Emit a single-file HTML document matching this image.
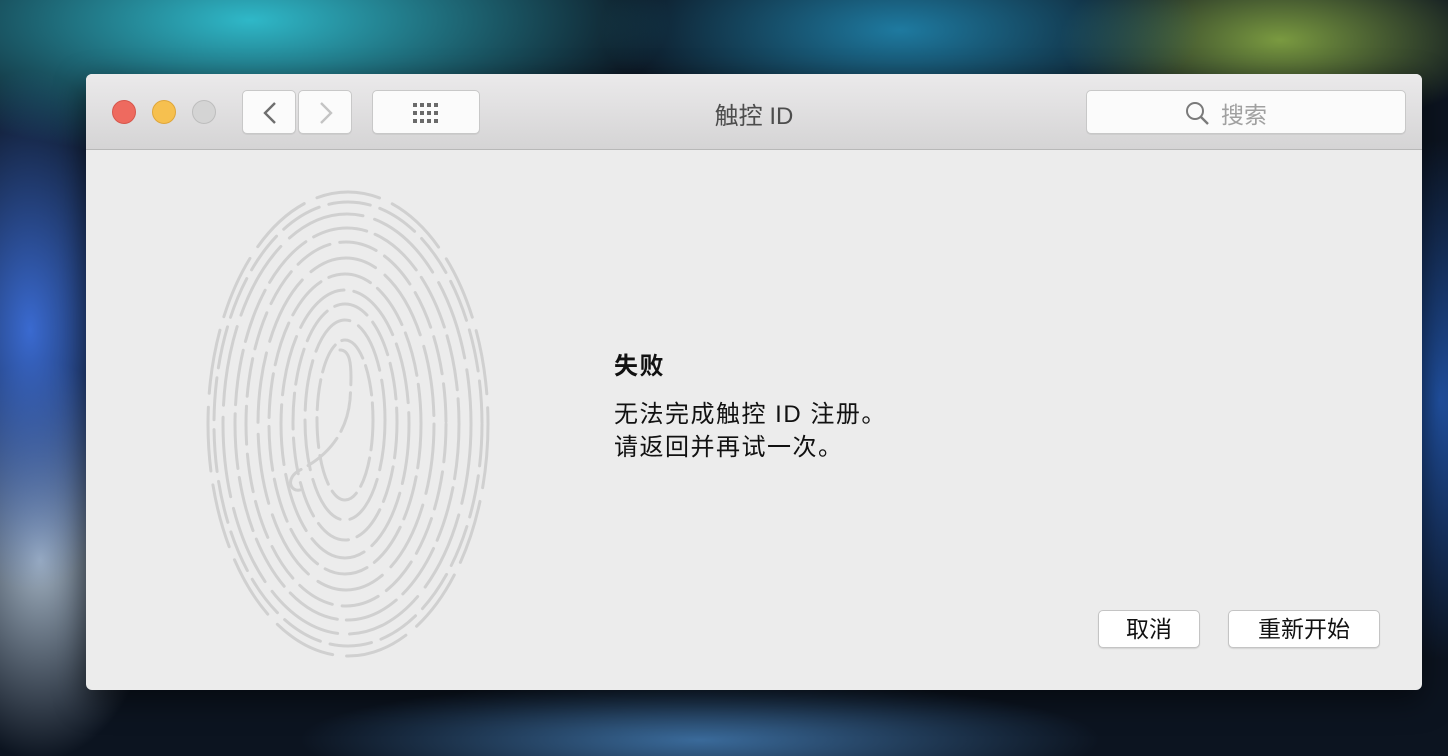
<!DOCTYPE html>
<html><head><meta charset="utf-8"><style>
*{margin:0;padding:0;box-sizing:border-box}
body{width:1448px;height:756px;overflow:hidden;position:relative;font-family:"Liberation Sans","Noto Sans CJK SC",sans-serif;
background:
radial-gradient(ellipse 420px 140px at 250px 20px,#2fb8c8 0%,rgba(40,160,180,0) 100%),
radial-gradient(ellipse 300px 110px at 900px 30px,#1e7aa0 0%,rgba(30,120,160,0) 100%),
radial-gradient(ellipse 220px 90px at 1280px 40px,#7a9a40 0%,rgba(120,150,60,0) 100%),
radial-gradient(ellipse 120px 260px at 30px 330px,#3a6ad0 0%,rgba(50,100,200,0) 100%),
radial-gradient(ellipse 120px 200px at 40px 560px,#a0b0c0 0%,rgba(150,170,190,0) 100%),
radial-gradient(ellipse 100px 260px at 1440px 400px,#2050a0 0%,rgba(30,80,160,0) 100%),
radial-gradient(ellipse 400px 60px at 700px 740px,#3a6a9a 0%,rgba(60,100,150,0) 100%),
#0c1420;}
.win{position:absolute;left:86px;top:74px;width:1336px;height:616px;background:#ececec;border-radius:6px;overflow:hidden;box-shadow:0 10px 30px rgba(0,0,0,.5)}
.tb{height:76px;background:linear-gradient(#ebeaeb,#d5d4d5);border-bottom:1px solid #b8b8b8;position:relative}
.dot{position:absolute;top:26px;width:24px;height:24px;border-radius:50%}
.btn{position:absolute;background:#fbfbfb;border:1px solid #c8c8c8;border-radius:5px;box-shadow:0 1px 0 rgba(0,0,0,.05)}
.title{position:absolute;left:0;right:0;top:22px;text-align:center;font-size:24px;color:#4d4d4d}
.txt{position:absolute;left:528px;color:#111;font-size:24px;letter-spacing:1.5px;white-space:nowrap}
.pb{position:absolute;top:536px;height:38px;background:#fff;border:1px solid #c4c4c4;border-radius:5px;font-size:23px;text-align:center;line-height:36px;color:#111;box-shadow:0 1px 1px rgba(0,0,0,.1)}
</style></head><body>
<div class="win">
<div class="tb">
<div class="dot" style="left:26px;background:#ee6a5f;border:1px solid #d6574c"></div>
<div class="dot" style="left:66px;background:#f6c04f;border:1px solid #dfa63a"></div>
<div class="dot" style="left:106px;background:#d4d4d4;border:1px solid #bdbdbd"></div>
<div class="btn" style="left:156px;top:16px;width:54px;height:44px"><svg width="54" height="44"><path d="M32 12 L22 22 L32 32" fill="none" stroke="#6e6e6e" stroke-width="2.4"/></svg></div>
<div class="btn" style="left:212px;top:16px;width:54px;height:44px"><svg width="54" height="44"><path d="M22 12 L32 22 L22 32" fill="none" stroke="#c4c4c4" stroke-width="2.4"/></svg></div>
<div class="btn" style="left:286px;top:16px;width:108px;height:44px"><svg width="108" height="44"><g fill="#6a6a6a">
<rect x="40" y="12" width="4" height="4"/><rect x="47" y="12" width="4" height="4"/><rect x="54" y="12" width="4" height="4"/><rect x="61" y="12" width="4" height="4"/>
<rect x="40" y="20" width="4" height="4"/><rect x="47" y="20" width="4" height="4"/><rect x="54" y="20" width="4" height="4"/><rect x="61" y="20" width="4" height="4"/>
<rect x="40" y="28" width="4" height="4"/><rect x="47" y="28" width="4" height="4"/><rect x="54" y="28" width="4" height="4"/><rect x="61" y="28" width="4" height="4"/></g></svg></div>
<div class="title">触控 ID</div>
<div class="btn" style="left:1000px;top:16px;width:320px;height:44px">
<svg width="30" height="30" style="position:absolute;left:96px;top:8px"><circle cx="12" cy="12" r="8" fill="none" stroke="#7a7a7a" stroke-width="2"/><path d="M18 18 L25 25" stroke="#7a7a7a" stroke-width="2.4"/></svg>
<span style="position:absolute;left:134px;top:5px;font-size:23px;color:#a0a0a0">搜索</span></div>
</div>
<svg style="position:absolute;left:0;top:76px" width="500" height="540" viewBox="86 150 500 540">
<g fill="none" stroke="#d0d0d0" stroke-width="3" stroke-linecap="round">
<path d="M340 350 C352 350 352 370 350 400 C346 440 320 460 300 470 C285 478 290 492 300 490" stroke-dasharray="40 8"/>
<ellipse cx="345" cy="420" rx="28" ry="80" stroke-dasharray="30 8"/>
<ellipse cx="345" cy="420" rx="40" ry="100" stroke-dasharray="50 10"/>
<ellipse cx="345" cy="422" rx="52" ry="118" stroke-dasharray="36 9"/>
<ellipse cx="345" cy="424" rx="64" ry="134" stroke-dasharray="60 10"/>
<ellipse cx="345" cy="424" rx="76" ry="150" stroke-dasharray="44 9"/>
<ellipse cx="346" cy="424" rx="88" ry="166" stroke-dasharray="70 12"/>
<ellipse cx="346" cy="424" rx="100" ry="182" stroke-dasharray="38 10"/>
<ellipse cx="347" cy="424" rx="112" ry="196" stroke-dasharray="55 9"/>
<ellipse cx="347" cy="424" rx="124" ry="210" stroke-dasharray="80 12"/>
<ellipse cx="348" cy="424" rx="134" ry="222" stroke-dasharray="42 10"/>
<ellipse cx="348" cy="424" rx="140" ry="232" stroke-dasharray="64 14"/>
</g></svg>
<div class="txt" style="top:272px;font-weight:bold">失败</div>
<div class="txt" style="top:320px">无法完成触控 ID 注册。</div>
<div class="txt" style="top:353px">请返回并再试一次。</div>
<div class="pb" style="left:1012px;width:102px">取消</div>
<div class="pb" style="left:1142px;width:152px">重新开始</div>
</div>
</body></html>
